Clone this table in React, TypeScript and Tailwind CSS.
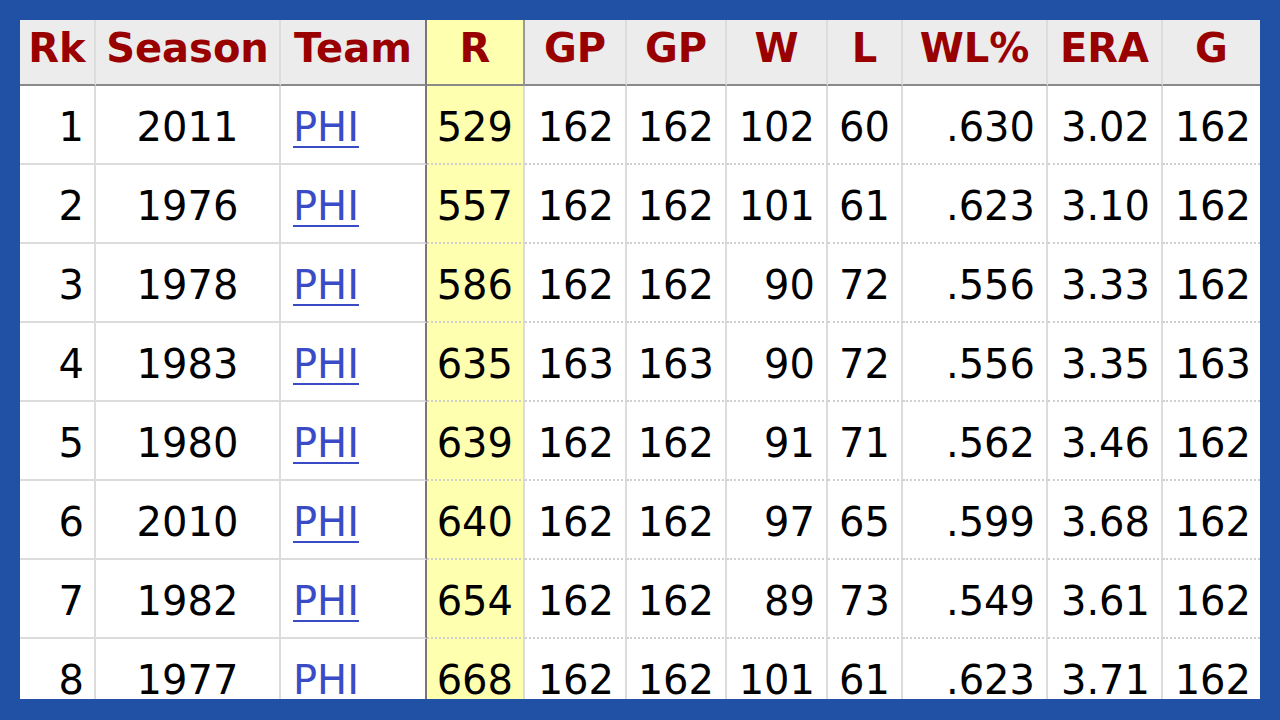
import React from "react";

type Row = [number, string, number, number, number, number, number, string, string, number];

const rows: Row[] = [
  [1, "2011", 529, 162, 162, 102, 60, ".630", "3.02", 162],
  [2, "1976", 557, 162, 162, 101, 61, ".623", "3.10", 162],
  [3, "1978", 586, 162, 162, 90, 72, ".556", "3.33", 162],
  [4, "1983", 635, 163, 163, 90, 72, ".556", "3.35", 163],
  [5, "1980", 639, 162, 162, 91, 71, ".562", "3.46", 162],
  [6, "2010", 640, 162, 162, 97, 65, ".599", "3.68", 162],
  [7, "1982", 654, 162, 162, 89, 73, ".549", "3.61", 162],
  [8, "1977", 668, 162, 162, 101, 61, ".623", "3.71", 162],
];

const headers = [
  { label: "Rk", w: "w-[76px]" },
  { label: "Season", w: "w-[185px]" },
  { label: "Team", w: "w-[146px]" },
  { label: "R", w: "w-[98px]" },
  { label: "GP", w: "w-[102px]" },
  { label: "GP", w: "w-[100px]" },
  { label: "W", w: "w-[101px]" },
  { label: "L", w: "w-[75px]" },
  { label: "WL%", w: "w-[145px]" },
  { label: "ERA", w: "w-[115px]" },
  { label: "G", w: "w-[97px]" },
];

export default function App() {
  return (
    <div className="w-[1280px] h-[720px] bg-[#2151a4] px-[20px] pt-[20px] overflow-hidden">
      <div
        className="w-[1240px] h-[679px] bg-white overflow-hidden"
        style={{ fontFamily: '"DejaVu Sans", Verdana, sans-serif' }}
      >
        <table className="table-fixed border-separate border-spacing-0 w-[1240px] text-[40px] leading-none">
          <thead>
            <tr className="h-[66px]">
              {headers.map((h, i) => (
                <th
                  key={i}
                  className={
                    h.w +
                    " p-0 pb-[8px] text-center align-middle font-bold text-[#990000] border-b-2 border-b-[#8a8a8a] " +
                    (i === 2
                      ? "border-r-2 border-r-[#777] bg-[#ececec]"
                      : i === 3
                      ? "border-r-2 border-r-[#9a9a9a] bg-[#ffffb0]"
                      : i === 10
                      ? "bg-[#ececec]"
                      : "border-r-2 border-r-[#dcdcdc] bg-[#ececec]")
                  }
                >
                  {h.label}
                </th>
              ))}
            </tr>
          </thead>
          <tbody>
            {rows.map((r) => {
              const solid = "border-b-2 border-b-[#dcdcdc] border-solid";
              const dotted = "border-b-2 border-b-[#cfcfcf] [border-bottom-style:dotted]";
              const vr = "border-r-2 border-r-[#dcdcdc]";
              return (
                <tr key={r[0]} className="h-[79px] text-black">
                  <td className={`p-0 pr-[10px] pt-[4px] text-right align-middle ${solid} ${vr}`}>{r[0]}</td>
                  <td className={`p-0 pt-[4px] text-center align-middle ${solid} ${vr}`}>{r[1]}</td>
                  <td className={`p-0 pl-[12px] pt-[4px] text-left align-middle ${solid} border-r-2 border-r-[#777]`}>
                    <a className="text-[#3a4bc6] underline decoration-[2px] underline-offset-[5px]" href="#">
                      PHI
                    </a>
                  </td>
                  <td className={`p-0 pr-[10px] pt-[4px] text-right align-middle bg-[#ffffb0] ${dotted} ${vr}`}>{r[2]}</td>
                  <td className={`p-0 pr-[11px] pt-[4px] text-right align-middle ${dotted} ${vr}`}>{r[3]}</td>
                  <td className={`p-0 pr-[11px] pt-[4px] text-right align-middle ${dotted} ${vr}`}>{r[4]}</td>
                  <td className={`p-0 pr-[11px] pt-[4px] text-right align-middle ${dotted} ${vr}`}>{r[5]}</td>
                  <td className={`p-0 pr-[11px] pt-[4px] text-right align-middle ${dotted} ${vr}`}>{r[6]}</td>
                  <td className={`p-0 pr-[11px] pt-[4px] text-right align-middle ${dotted} ${vr}`}>{r[7]}</td>
                  <td className={`p-0 pr-[11px] pt-[4px] text-right align-middle ${dotted} ${vr}`}>{r[8]}</td>
                  <td className={`p-0 pr-[9px] pt-[4px] text-right align-middle ${dotted}`}>{r[9]}</td>
                </tr>
              );
            })}
          </tbody>
        </table>
      </div>
    </div>
  );
}
